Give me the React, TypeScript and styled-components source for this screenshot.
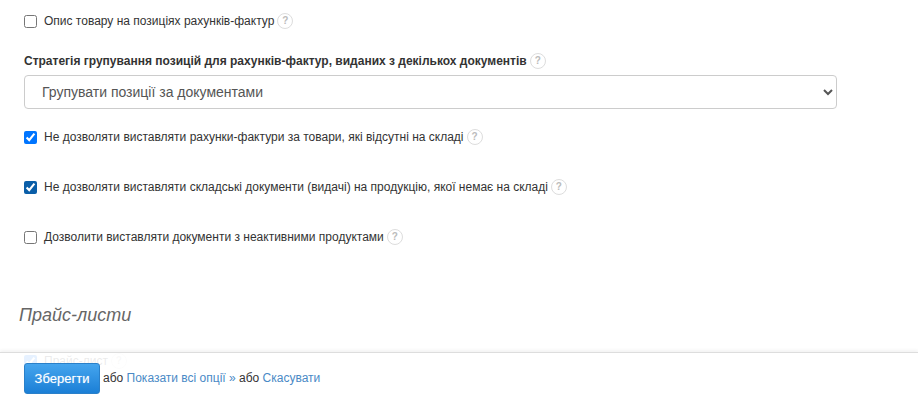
import React from "react";
import styled, { createGlobalStyle } from "styled-components";

const Global = createGlobalStyle`
  html, body { margin: 0; padding: 0; background: #fff; height: 404px; overflow: hidden; }
  body { font-family: "Liberation Sans", Arial, sans-serif; font-size: 12px; color: #333; }
`;

const Page = styled.div`
  position: relative;
  width: 918px;
  height: 404px;
  overflow: hidden;
`;

const Form = styled.div`
  display: flex;
  flex-direction: column;
  padding: 13px 81px 0 24px;
`;

const CheckRow = styled.label<{ $after: number }>`
  display: flex;
  align-items: center;
  height: 16px;
  margin-bottom: ${(p) => p.$after}px;
  line-height: 16px;
`;

const Check = styled.input.attrs({ type: "checkbox" })<{ $focused?: boolean }>`
  width: 13px;
  height: 13px;
  margin: 0 7px 0 0;
  flex: none;
  accent-color: ${(p) => (p.$focused ? "#0a5ea8" : "#0075ff")};
`;

const Help = styled.span`
  display: inline-flex;
  align-items: center;
  justify-content: center;
  box-sizing: border-box;
  width: 16px;
  height: 16px;
  margin-left: 3px;
  border: 1px solid #ddd;
  border-radius: 50%;
  color: #bbb;
  font-size: 10px;
  font-weight: 700;
  line-height: 1;
`;

const FieldLabel = styled.div`
  display: flex;
  align-items: center;
  height: 16px;
  margin-bottom: 6px;
  font-weight: 700;
`;

const Select = styled.select`
  display: block;
  width: 100%;
  height: 34px;
  box-sizing: border-box;
  margin-bottom: 20px;
  padding: 0 13px;
  background: #fff;
  border: 1px solid #ccc;
  border-radius: 4px;
  color: #555;
  font-family: inherit;
  font-size: 14px;
`;

const SectionTitle = styled.h3`
  margin: 1px 0 28px -5px;
  height: 20px;
  font-size: 18px;
  line-height: 20px;
  font-weight: 400;
  font-style: italic;
  color: #666;
`;

const Footer = styled.div`
  position: absolute;
  left: 0;
  right: 0;
  bottom: 0;
  height: 52px;
  box-sizing: border-box;
  display: flex;
  align-items: flex-start;
  padding: 10px 24px 0;
  background: rgba(255, 255, 255, 0.9);
  border-top: 1px solid #ddd;
  box-shadow: 0 -2px 3px rgba(0, 0, 0, 0.05);
`;

const SaveButton = styled.button`
  width: 76px;
  height: 31px;
  margin-right: 3px;
  padding: 0;
  border: 1px solid #2a80c9;
  border-radius: 3px;
  background: linear-gradient(#45a5ee, #1b7fd6);
  color: #fff;
  font-family: inherit;
  font-size: 13px;
  font-weight: 400;
  text-shadow: 0 0 1px rgba(255, 255, 255, 0.5);
`;

const FooterText = styled.span`
  line-height: 30px;
  color: #333;
  white-space: pre;
`;

const FooterLink = styled.a`
  color: #4a8ac6;
  text-decoration: none;
`;

export default function App() {
  return (
    <Page>
      <Global />
      <Form>
        <CheckRow $after={24}>
          <Check />
          Опис товару на позиціях рахунків-фактур
          <Help>?</Help>
        </CheckRow>
        <FieldLabel>
          Стратегія групування позицій для рахунків-фактур, виданих з декількох документів
          <Help>?</Help>
        </FieldLabel>
        <Select defaultValue="docs">
          <option value="docs">Групувати позиції за документами</option>
        </Select>
        <CheckRow $after={34}>
          <Check defaultChecked />
          Не дозволяти виставляти рахунки-фактури за товари, які відсутні на складі
          <Help>?</Help>
        </CheckRow>
        <CheckRow $after={34}>
          <Check defaultChecked $focused />
          Не дозволяти виставляти складські документи (видачі) на продукцію, якої немає на складі
          <Help>?</Help>
        </CheckRow>
        <CheckRow $after={59}>
          <Check />
          Дозволити виставляти документи з неактивними продуктами
          <Help>?</Help>
        </CheckRow>
        <SectionTitle>Прайс-листи</SectionTitle>
        <CheckRow $after={0}>
          <Check defaultChecked />
          Прайс-лист
          <Help>?</Help>
        </CheckRow>
      </Form>
      <Footer>
        <SaveButton>Зберегти</SaveButton>
        <FooterText>
          або <FooterLink href="#">Показати всі опції »</FooterLink> або <FooterLink href="#">Скасувати</FooterLink>
        </FooterText>
      </Footer>
    </Page>
  );
}
